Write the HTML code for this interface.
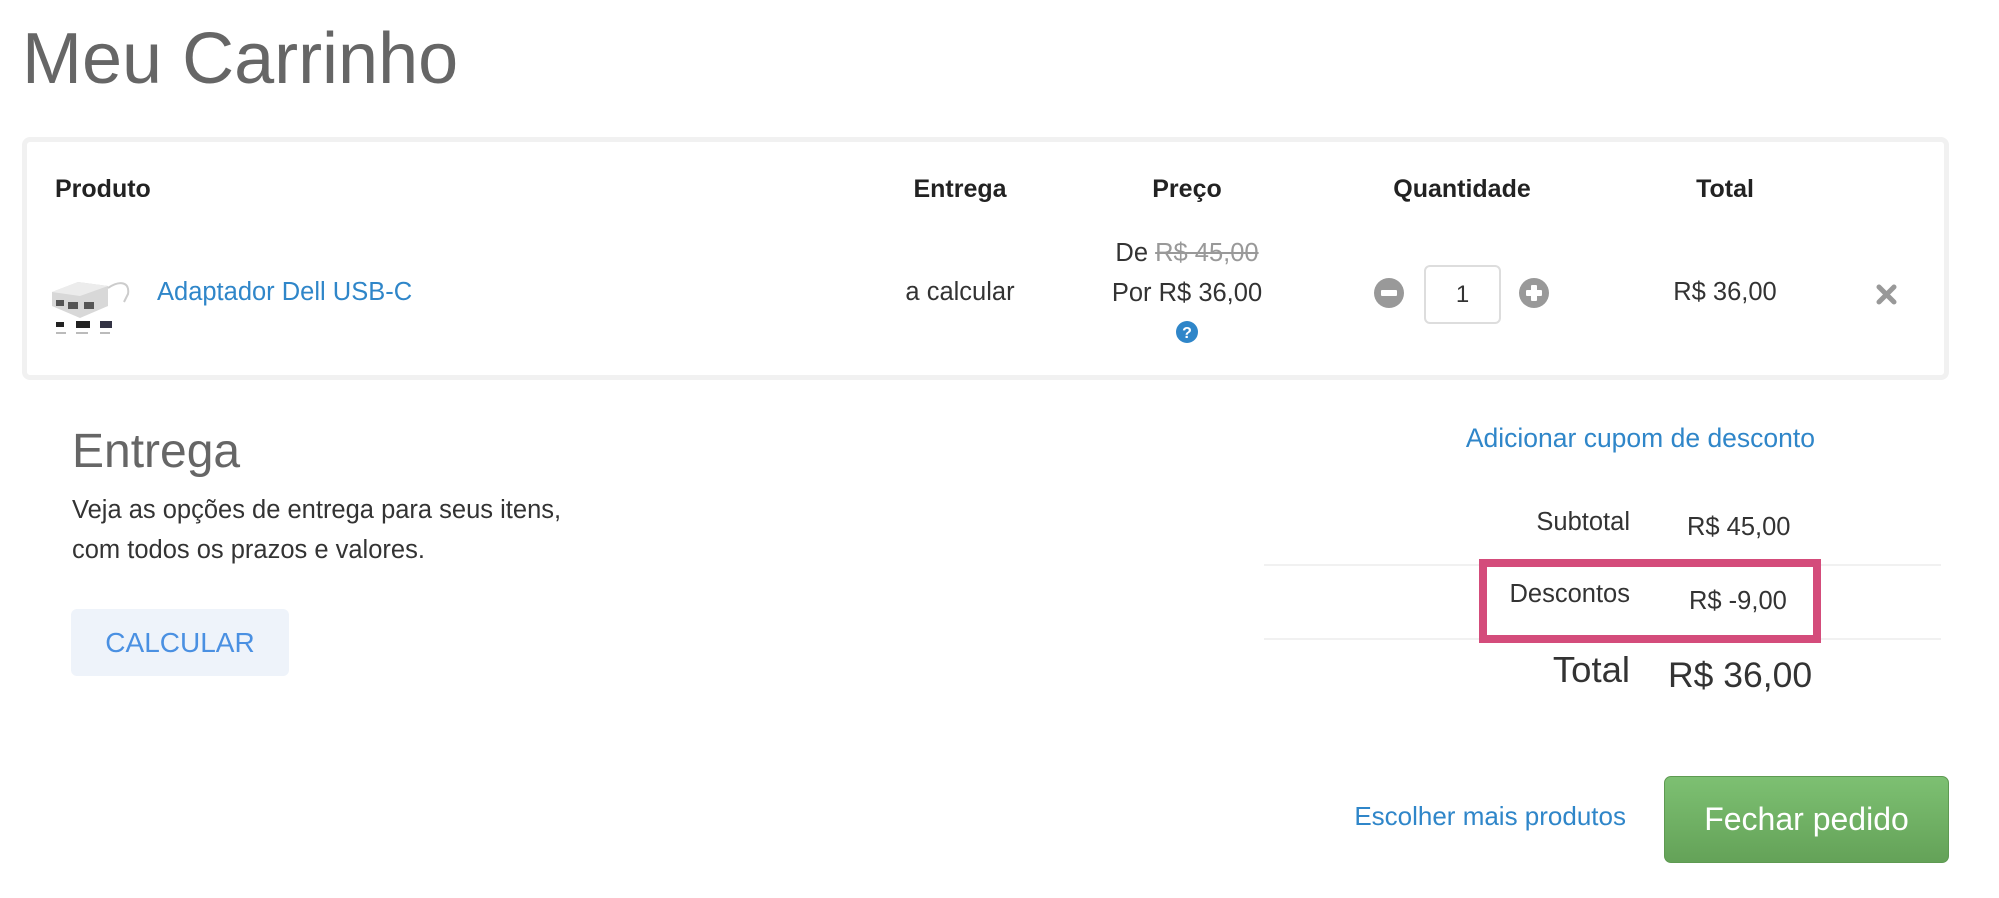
<!DOCTYPE html>
<html><head><meta charset="utf-8">
<style>
*{margin:0;padding:0;box-sizing:border-box}
body{width:1999px;height:898px;background:#fff;font-family:"Liberation Sans",Arial,sans-serif;color:#333;position:relative;overflow:hidden}
.a{position:absolute;white-space:nowrap}
.c{transform:translateX(-50%)}
.r{transform:translateX(-100%)}
.h{font-weight:bold;font-size:25px;color:#222;top:175px}
.blue{color:#2f86c9}
</style></head><body>
<div class="a" style="left:22px;top:18px;font-size:72px;color:#666">Meu Carrinho</div>

<div class="a" style="left:22px;top:137px;width:1927px;height:243px;border:5px solid #f1f1f1;border-radius:8px"></div>

<div class="a h" style="left:55px">Produto</div>
<div class="a h c" style="left:960px">Entrega</div>
<div class="a h c" style="left:1187px">Preço</div>
<div class="a h c" style="left:1462px">Quantidade</div>
<div class="a h c" style="left:1725px">Total</div>

<svg class="a" style="left:48px;top:262px" width="90" height="80" viewBox="0 0 90 80">
<polygon points="4,30 30,20 60,24 60,44 32,56 4,44" fill="#d8d8d8"/>
<polygon points="4,30 30,20 60,24 32,34" fill="#ececec"/>
<rect x="8" y="38" width="8" height="6" fill="#555"/><rect x="20" y="40" width="10" height="7" fill="#555"/><rect x="36" y="40" width="10" height="7" fill="#555"/>
<path d="M60 26 C72 18 82 20 80 32 L76 40" stroke="#ccc" stroke-width="2" fill="none"/>
<rect x="8" y="60" width="8" height="5" fill="#222"/><rect x="28" y="59" width="14" height="7" fill="#222"/><rect x="52" y="59" width="12" height="7" fill="#334"/>
<rect x="8" y="70" width="10" height="2" fill="#bbb"/><rect x="28" y="70" width="12" height="2" fill="#bbb"/><rect x="52" y="70" width="10" height="2" fill="#bbb"/>
</svg>
<div class="a blue" style="left:157px;top:278px;font-size:25.5px">Adaptador Dell USB-C</div>
<div class="a c" style="left:960px;top:278px;font-size:25.5px">a calcular</div>

<div class="a c" style="left:1187px;top:239px;font-size:25.5px">De <span style="color:#999;text-decoration:line-through">R$ 45,00</span></div>
<div class="a c" style="left:1187px;top:279px;font-size:25.5px">Por R$ 36,00</div>
<svg class="a" style="left:1176px;top:321px" width="22" height="22" viewBox="0 0 22 22"><circle cx="11" cy="11" r="11" fill="#2f86c9"/><text x="11" y="17" text-anchor="middle" font-family="Liberation Sans" font-weight="bold" font-size="16" fill="#fff">?</text></svg>

<svg class="a" style="left:1374px;top:278px" width="30" height="30" viewBox="0 0 30 30"><circle cx="15" cy="15" r="15" fill="#999"/><rect x="7" y="12" width="16" height="6" rx="1" fill="#fff"/></svg>
<div class="a" style="left:1424px;top:265px;width:77px;height:59px;border:2px solid #ddd;border-radius:6px;font-size:24px;text-align:center;line-height:55px">1</div>
<svg class="a" style="left:1519px;top:278px" width="30" height="30" viewBox="0 0 30 30"><circle cx="15" cy="15" r="15" fill="#999"/><rect x="7" y="12" width="16" height="6" rx="1" fill="#fff"/><rect x="12" y="7" width="6" height="16" rx="1" fill="#fff"/></svg>

<div class="a c" style="left:1725px;top:278px;font-size:25.5px">R$ 36,00</div>
<svg class="a" style="left:1876px;top:284px" width="21" height="21" viewBox="0 0 21 21"><path d="M3 3 L18 18 M18 3 L3 18" stroke="#999" stroke-width="5" stroke-linecap="round"/></svg>

<div class="a" style="left:72px;top:424px;font-size:48px;color:#666">Entrega</div>
<div class="a" style="left:72px;top:490px;font-size:25.5px;line-height:40px;color:#333">Veja as opções de entrega para seus itens,<br>com todos os prazos e valores.</div>
<div class="a" style="left:71px;top:609px;width:218px;height:67px;background:#eef3fa;border-radius:6px;color:#4a90e2;font-size:28px;text-align:center;line-height:67px">CALCULAR</div>

<div class="a blue r" style="left:1815px;top:423px;font-size:26.5px">Adicionar cupom de desconto</div>

<div class="a r" style="left:1630px;top:508px;font-size:25.5px">Subtotal</div>
<div class="a" style="left:1687px;top:513px;font-size:25.5px">R$ 45,00</div>
<div class="a" style="left:1264px;top:564px;width:677px;height:2px;background:#f1f1f1"></div>
<div class="a" style="left:1264px;top:638px;width:677px;height:2px;background:#f1f1f1"></div>
<div class="a" style="left:1479px;top:559px;width:342px;height:84px;border:8px solid #d44c7b"></div>
<div class="a r" style="left:1630px;top:580px;font-size:25.5px">Descontos</div>
<div class="a" style="left:1689px;top:587px;font-size:25.5px">R$ -9,00</div>
<div class="a r" style="left:1630px;top:649px;font-size:36.5px">Total</div>
<div class="a" style="left:1668px;top:655px;font-size:35.5px">R$ 36,00</div>

<div class="a blue r" style="left:1626px;top:801px;font-size:26px">Escolher mais produtos</div>
<div class="a" style="left:1664px;top:776px;width:285px;height:87px;border-radius:7px;background:linear-gradient(#7dc072,#64a258);border:1px solid #5e9a52;color:#fff;font-size:32px;text-align:center;line-height:85px">Fechar pedido</div>
</body></html>
